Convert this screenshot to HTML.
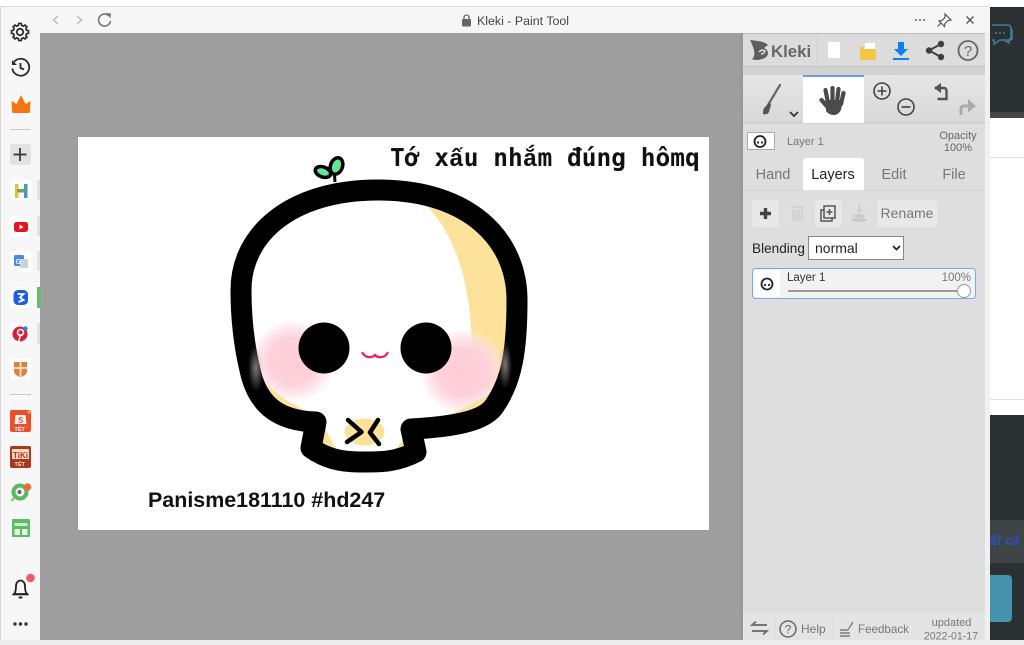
<!DOCTYPE html>
<html><head><meta charset="utf-8"><title>Kleki - Paint Tool</title>
<style>
html,body{margin:0;padding:0;width:1024px;height:645px;overflow:hidden;background:#fff}
svg{display:block}
text{font-family:"Liberation Sans",sans-serif}
</style></head><body>
<svg width="1024" height="645" viewBox="0 0 1024 645" xmlns="http://www.w3.org/2000/svg">
<defs>
<radialGradient id="bl"><stop offset="0" stop-color="#fdccd7"/><stop offset=".55" stop-color="#fdd1db"/><stop offset=".8" stop-color="#fddfe5" stop-opacity=".7"/><stop offset="1" stop-color="#fde8ec" stop-opacity="0"/></radialGradient>
<radialGradient id="bs"><stop offset="0" stop-color="#c8b4b8" stop-opacity=".65"/><stop offset="1" stop-color="#c8b4b8" stop-opacity="0"/></radialGradient>
<linearGradient id="tb" x1="0" y1="0" x2="0" y2="1"><stop offset="0" stop-color="#e6e6e6"/><stop offset="1" stop-color="#d8d8d8"/></linearGradient>
<clipPath id="skull"><path d="M316 422C282 421 258 408 250 370C244 345 241 320 241 290C241 235 290 190 378 190C470 190 517 240 517 300C517 350 512 380 495 405C485 422 450 427 411 429L416 452C395 463 377 462 360 462C340 462 325 458 311 448z"/></clipPath>
</defs>
<!-- page base -->
<rect width="1024" height="645" fill="#f7f7f7"/>
<rect width="1024" height="6" fill="#fff"/>
<rect y="6" width="990" height="1.5" fill="#dcdcdc"/>
<!-- right background page -->
<rect x="990" y="7" width="34" height="111" fill="#2b3032"/>
<rect x="990" y="112" width="34" height="6" fill="#44484a"/>
<rect x="990" y="118" width="34" height="297" fill="#fff"/>
<rect x="990" y="157" width="34" height="1" fill="#e2e2e2"/>
<rect x="990" y="399" width="34" height="1" fill="#e2e2e2"/>
<rect x="990" y="415" width="34" height="225" fill="#2b3032"/>
<rect x="990" y="520" width="34" height="43" fill="#3f4446"/>
<text x="989" y="545" font-size="13.500" font-style="italic" font-weight="bold" fill="#2f4fc0">ất cả</text>
<rect x="980" y="575" width="32" height="47" rx="4" fill="#4593ad"/>
<g fill="none" stroke="#3f7f98" stroke-width="1.600"><path d="M992 25h16a3 3 0 0 1 3 3v9a3 3 0 0 1-3 3h-8l-6 4v-4h-2"/><path d="M1011 29a3 3 0 0 1 1 2v8l-1 1h-2v3l-5-3"/></g>
<g fill="#3f7f98"><circle cx="996" cy="33" r="1"/><circle cx="1000" cy="33" r="1"/><circle cx="1004" cy="33" r="1"/></g>

<!-- window -->
<rect x="40" y="7" width="950" height="26" fill="#f6f6f6"/>
<rect x="40" y="33" width="703" height="607" fill="#9e9e9e"/>
<rect x="985" y="33" width="5" height="607" fill="#f0f0f0"/>
<rect y="640" width="1024" height="5" fill="#ececec"/>
<!-- toolbar -->
<g fill="none" stroke="#bcbcbc" stroke-width="1.500"><path d="M58 16l-4.500 4 4.500 4"/><path d="M77 16l4.500 4-4.500 4"/></g>
<path d="M109 16a6 6 0 1 0 1.500 5" fill="none" stroke="#777" stroke-width="1.600"/><path d="M106 13l5 .5-.5 5z" fill="#777"/>
<rect x="462" y="19" width="9" height="7.500" rx="1" fill="#666"/><path d="M464 19.500v-2a2.500 2.500 0 0 1 5 0v2" fill="none" stroke="#666" stroke-width="1.300"/>
<text x="477" y="25" font-size="12.400" fill="#444">Kleki - Paint Tool</text>
<g fill="#666"><circle cx="916" cy="20" r="1"/><circle cx="920" cy="20" r="1"/><circle cx="924" cy="20" r="1"/></g>
<path d="M945 14l6 6-3 .5-3 3-.5 3-5.500-5.500 3-.5 3-3zM941 23l-3.500 3.500" fill="none" stroke="#555" stroke-width="1.200"/>
<path d="M966.500 16.500l7 7M973.500 16.500l-7 7" stroke="#555" stroke-width="1.400"/>

<!-- left sidebar -->
<rect x="0" y="7" width="40" height="633" fill="#f7f7f7"/>
<rect x="0" y="7" width="1" height="633" fill="#d5d5d5"/>
<g fill="none" stroke="#2b2b2b" stroke-width="1.800">
<circle cx="20" cy="32" r="3.200"/>
<path stroke-width="2" d="M18.500 24h3l.5 2.200 2 .9 2-1.200 2.100 2.100-1.200 2 .9 2 2.200.5v3l-2.200.5-.9 2 1.200 2-2.100 2.100-2-1.200-2 .9-.5 2.200h-3l-.5-2.200-2-.9-2 1.200-2.100-2.100 1.200-2-.9-2-2.200-.5v-3l2.200-.5.9-2-1.200-2 2.100-2.100 2 1.200 2-.9z" transform="translate(3 3.100) scale(.85)"/>
<path d="M14 62a8.500 8.500 0 1 1-1.700 6.500"/>
<path d="M20.500 63v5l3.500 1.500"/>
</g>
<path d="M12 60v5h5z" fill="#2b2b2b"/>
<path d="M13.500 113c-.8 0-1.300-.5-1.400-1.300L11.500 101l5 3L21 95l4.500 9 5-3-.6 10.700c-.1.800-.6 1.300-1.400 1.300z" fill="#f5760f"/>
<rect x="10" y="129" width="21" height="1" fill="#c8c8c8"/>
<rect x="10" y="144" width="21" height="21" rx="3" fill="#e2e2e2"/>
<path d="M20 148v13M13.500 154.500h13" stroke="#333" stroke-width="1.700"/>
<!-- app icons -->
<g><rect x="10" y="179" width="21" height="21" rx="4" fill="#fff"/>
<rect x="15" y="184" width="3.500" height="14" fill="#e8c23a"/><rect x="24" y="184" width="3.500" height="14" fill="#3e9fb0"/><rect x="17" y="189" width="9" height="3.500" fill="#6aa36f"/>
<rect x="37" y="180" width="3" height="20" fill="#e2e2e2"/></g>
<g><rect x="10" y="216" width="21" height="21" rx="4" fill="#fff"/><rect x="14" y="222" width="14" height="10" rx="2.500" fill="#e8131f"/><path d="M19.500 224.500l4 2.500-4 2.500z" fill="#fff"/><rect x="37" y="216" width="3" height="20" fill="#e2e2e2"/></g>
<g><rect x="10" y="251" width="21" height="21" rx="4" fill="#fff"/><rect x="14" y="255" width="10" height="11" rx="1.500" fill="#4a86e8"/><rect x="20" y="259" width="8" height="9" rx="1" fill="#c9d3da"/><text x="15.500" y="264" font-size="7" font-weight="bold" fill="#fff">G</text><rect x="37" y="251" width="3" height="20" fill="#e2e2e2"/></g>
<g><rect x="10" y="287" width="21" height="21" rx="4" fill="#fff"/><rect x="13.500" y="290" width="14.500" height="15" rx="4.500" fill="#1c5fe6"/><path d="M17.500 294h6l-3.500 3.500 3.500 2.500-5 2" fill="none" stroke="#fff" stroke-width="1.800"/><rect x="37" y="287" width="3.500" height="21" fill="#67bb6a"/></g>
<g><rect x="10" y="323" width="21" height="21" rx="4" fill="#fff"/><circle cx="20" cy="334" r="7.500" fill="#dd1c3c"/><path d="M18.500 343l2-9" stroke="#fff" stroke-width="1.500"/><circle cx="20.500" cy="332.500" r="3" fill="none" stroke="#fff" stroke-width="1.600"/><circle cx="25.500" cy="328.500" r="2.200" fill="#1e88e5"/><rect x="37" y="323" width="3" height="21" fill="#e2e2e2"/></g>
<g><rect x="10" y="358" width="21" height="21" rx="4" fill="#fff"/><path d="M14 362h13v9c0 3-3 5-6.500 6.500C17 376 14 374 14 371z" fill="#d9833f"/><path d="M20.500 362v15M14 368h13" stroke="#f2e2c9" stroke-width="1.800"/></g>
<rect x="10" y="394" width="21" height="1" fill="#c8c8c8"/>
<g><rect x="10" y="410" width="21" height="22" rx="2" fill="#ee4d2d"/><path d="M15.500 415h10l1 9h-12z" fill="#fff" opacity=".95"/><text x="18" y="423" font-size="8" font-weight="bold" fill="#ee4d2d">S</text><text x="14.500" y="431" font-size="5.500" font-weight="bold" fill="#fff">TẾT</text><circle cx="29" cy="412" r="1.500" fill="#f7b733"/></g>
<g><rect x="10" y="446" width="21" height="22" rx="2" fill="#a8391f"/><rect x="12" y="449" width="17" height="10" fill="#f3dcc0"/><text x="13" y="458" font-size="8" font-weight="bold" fill="#c9281e">TiKi</text><text x="14.500" y="466" font-size="5.500" font-weight="bold" fill="#f6e3b5">TẾT</text></g>
<g><circle cx="20" cy="492" r="6.500" fill="none" stroke="#5cb85c" stroke-width="4"/><circle cx="19.500" cy="492" r="2" fill="#666"/><path d="M15 497l-3.500 4" stroke="#7cc36e" stroke-width="2"/><circle cx="27.500" cy="487" r="3.800" fill="#ee6a3f"/></g>
<g><rect x="12" y="519" width="18" height="18" rx="1" fill="#5dbb63"/><rect x="14.500" y="523" width="13" height="3" fill="#cdeccf"/><rect x="14.500" y="529" width="5.500" height="6" fill="#e3f5e3"/><rect x="22" y="529" width="5.500" height="6" fill="#e3f5e3"/></g>
<path d="M14 594c1.500-1.500 2-4 2-8a4.500 5.500 0 0 1 9 0c0 4 .5 6.500 2 8z" fill="none" stroke="#222" stroke-width="1.800"/><rect x="12.500" y="593.500" width="16" height="1.800" fill="#222"/><rect x="18.500" y="596.500" width="4" height="2" rx="1" fill="#222"/>
<circle cx="30.500" cy="578" r="4.300" fill="#f5566c"/>
<g fill="#333"><circle cx="15" cy="624" r="1.700"/><circle cx="20.500" cy="624" r="1.700"/><circle cx="26" cy="624" r="1.700"/></g>

<!-- canvas -->
<rect x="78" y="137" width="631" height="393" fill="#fff"/>
<text x="390" y="166" style="font-family:'DejaVu Sans Mono',monospace;font-weight:bold;font-size:24.500px;white-space:pre" fill="#111">Tớ x<tspan style="font-family:'Liberation Mono',monospace">ấ</tspan>u nh<tspan style="font-family:'Liberation Mono',monospace">ắ</tspan>m đúng hômq</text>
<text x="148" y="507" font-size="21.450" font-weight="bold" fill="#111">Panisme181110 #hd247</text>
<!-- skull fill pieces -->
<g clip-path="url(#skull)">
<rect x="230" y="180" width="300" height="290" fill="#fff"/>
<path d="M426 205C455 235 470 280 472 345L468 390H520V205z" fill="#fde29b"/>
<ellipse cx="293" cy="361" rx="44" ry="42" fill="url(#bl)"/>
<ellipse cx="463" cy="372" rx="44" ry="44" fill="url(#bl)"/>
<path d="M250 368C264 382 278 398 303 409V425H250z" fill="#fde29b"/>
<path d="M438 420C465 408 490 398 512 372V430H430z" fill="#fde29b"/>
<path d="M325 428L337 451H316zM403 440L406 456H390z" fill="#fde29b"/>
<ellipse cx="364.500" cy="432" rx="20" ry="13.500" fill="#fde29b"/>
</g>
<!-- outline -->
<path d="M316 422C282 421 258 408 250 370C244 345 241 320 241 290C241 235 290 190 378 190C470 190 517 240 517 300C517 350 512 380 495 405C485 422 450 427 411 429L416 452C395 463 377 462 360 462C340 462 325 458 311 448z" fill="none" stroke="#000" stroke-width="21" stroke-linejoin="round"/>
<!-- bow -->
<path d="M348 420L361.500 432L347 442M378 420L370 432.500L379 444" fill="none" stroke="#000" stroke-width="4.500" stroke-linecap="round" stroke-linejoin="round"/>
<!-- smudges on outline -->
<ellipse cx="256" cy="368" rx="8" ry="24" fill="url(#bs)"/>
<ellipse cx="505" cy="365" rx="7" ry="24" fill="url(#bs)"/>
<!-- eyes, mouth -->
<circle cx="324" cy="348" r="25.500" fill="#000"/>
<circle cx="426" cy="348" r="25.500" fill="#000"/>
<path d="M362.500 353Q366 358 371 357Q374 356.500 375 355Q378 358 382 357Q386 356 387.500 353" fill="none" stroke="#f01f5b" stroke-width="2.300" stroke-linecap="round"/>
<!-- sprout -->
<path d="M335 182l-.5-8" stroke="#000" stroke-width="3"/>
<ellipse cx="323" cy="172" rx="8" ry="5" transform="rotate(20 323 172)" fill="#62e49a" stroke="#000" stroke-width="3.500"/>
<ellipse cx="336.500" cy="166" rx="6" ry="8.500" transform="rotate(20 336.500 166)" fill="#62e49a" stroke="#000" stroke-width="3.500"/>

<!-- panel -->
<rect x="740" y="33" width="3" height="607" fill="#999"/>
<rect x="743" y="34" width="242" height="606" fill="#dedede"/>
<rect x="743" y="33" width="242" height="1.500" fill="#bbb"/>
<rect x="743" y="34" width="242" height="33" fill="#dcdcdc"/>
<rect x="743" y="66" width="242" height="1" fill="#c8c8c8"/>
<rect x="743" y="67" width="242" height="8" fill="#d2d2d2"/>
<rect x="743" y="75" width="242" height="48" fill="url(#tb)"/>
<rect x="743" y="122.500" width="242" height="1" fill="#c4c4c4"/>
<rect x="817" y="34" width="1" height="32" fill="#d0d0d0"/>
<!-- logo -->
<path d="M750 40C757 41 764 41 768 45L764 48C768 50 769 53 767 56C764 60 755 61 752 59C755 57 755 52 753 47C752 44 751 42 750 40z" fill="#5e5e5e"/>
<path d="M759 52q3-3 6-1q-1 3-4 3" fill="none" stroke="#dcdcdc" stroke-width="1.500"/>
<text x="771" y="57" font-size="16.800" font-weight="bold" fill="#666">Kleki</text>
<rect x="828" y="42" width="12" height="16" fill="#fff"/>
<path d="M860 49h16v9a2 2 0 0 1-2 2h-12a2 2 0 0 1-2-2z" fill="#f6c543"/><path d="M860 47h4v3h-4z" fill="#f6c543"/><path d="M865 43h10v6h-10z" fill="#fff"/>
<path d="M898 42h6v7h4l-7 7-7-7h4z" fill="#0a80f0"/><rect x="893" y="58" width="16" height="2" fill="#0a80f0"/>
<g fill="#3f3f3f"><circle cx="941" cy="44" r="3.200"/><circle cx="941" cy="57" r="3.200"/><circle cx="929" cy="50.500" r="3.200"/></g><path d="M941 44l-12 6.500 12 6.500" fill="none" stroke="#3f3f3f" stroke-width="2"/>
<circle cx="968" cy="50.500" r="9.500" fill="none" stroke="#666" stroke-width="1.800"/>
<text x="968" y="56" font-size="15" fill="#666" text-anchor="middle">?</text>
<!-- toolbar row -->
<rect x="803" y="75" width="61" height="48" fill="#fff"/>
<rect x="803" y="75" width="61" height="2" fill="#6d9ee0"/>
<path d="M780 85L768 105" stroke="#666" stroke-width="2.200" stroke-linecap="round"/>
<path d="M770 102l-5 5c-2 2-2 5-2 7c2 1 5 0 6-2l2-7z" fill="#555"/>
<path d="M790 112l4 4 4-4" fill="none" stroke="#333" stroke-width="1.800"/>
<g stroke="#4a4a4a" stroke-width="4.200" stroke-linecap="round"><path d="M828 103L825.500 90M832.500 102V88M837 102L838.500 89M841 104L843.500 93M830 110L821.500 100"/></g>
<path d="M826 100H843L841 110Q838 115 834 115Q829 115 826 111z" fill="#4a4a4a"/>
<g fill="none" stroke="#444" stroke-width="1.600"><circle cx="882" cy="91" r="8"/><path d="M877.500 91h9M882 86.500v9"/><circle cx="906" cy="107" r="8"/><path d="M901.500 107h9"/></g>
<path d="M935 88h9a2.500 2.500 0 0 1 2.500 2.500V99h-9" fill="none" stroke="#555" stroke-width="2.400"/><path d="M941 83l-7 5 7 5z" fill="#555"/>
<path d="M961 115V108.500a2.500 2.500 0 0 1 2.500-2.500H970" fill="none" stroke="#aaa" stroke-width="3"/><path d="M968 99l8 7-8 6.500z" fill="#aaa"/>
<!-- layer row -->
<rect x="747.500" y="132.500" width="27" height="17" fill="#fff" stroke="#aaa"/>
<circle cx="760" cy="141.500" r="5.500" fill="#fff" stroke="#222" stroke-width="1.800"/><circle cx="758" cy="142.500" r="1.100" fill="#222"/><circle cx="762" cy="142.500" r="1.100" fill="#222"/>
<text x="787" y="145" font-size="11" fill="#777">Layer 1</text>
<text x="958" y="139" font-size="11" fill="#666" text-anchor="middle">Opacity</text>
<text x="958" y="151" font-size="11" fill="#666" text-anchor="middle">100%</text>
<!-- tabs -->
<path d="M803 190v-29a3 3 0 0 1 3-3h55a3 3 0 0 1 3 3v29z" fill="#fff"/>
<rect x="743" y="189.500" width="60" height="1" fill="#d4d4d4"/><rect x="864" y="189.500" width="121" height="1" fill="#d4d4d4"/>
<text x="773" y="179" font-size="14.500" fill="#777" text-anchor="middle">Hand</text>
<text x="833" y="179" font-size="14.500" fill="#222" text-anchor="middle">Layers</text>
<text x="894" y="179" font-size="14.500" fill="#777" text-anchor="middle">Edit</text>
<text x="954" y="179" font-size="14.500" fill="#777" text-anchor="middle">File</text>
<!-- layer buttons -->
<g fill="#e8e8e8"><rect x="752" y="200" width="27" height="27" rx="3"/><rect x="815" y="200" width="27" height="27" rx="3"/><rect x="877" y="200" width="60" height="27" rx="3"/></g>
<g fill="#dfdfdf"><rect x="783" y="200" width="27" height="27" rx="3"/><rect x="846" y="200" width="27" height="27" rx="3"/></g>
<path d="M765.500 208v11M760 213.500h11" stroke="#444" stroke-width="3.400"/>
<g fill="none" stroke="#cdcdcd" stroke-width="1.300"><path d="M791 207h13M793 209v11h9v-11M795.500 210v9M797.500 210v9M799.500 210v9"/></g>
<g fill="none" stroke="#555" stroke-width="1.500"><rect x="824" y="206" width="11" height="12"/><path d="M824 210h-3v11h11v-3"/><path d="M829.500 209v6M826.500 212h6" stroke-width="1.600"/></g>
<g fill="#c8c8c8"><rect x="858.500" y="205" width="1.500" height="7"/><path d="M856.500 210l3 3 3-3z"/><ellipse cx="859" cy="216" rx="6" ry="1.800"/><ellipse cx="859" cy="220" rx="8" ry="1.800"/></g>
<text x="907" y="218" font-size="14" fill="#777" text-anchor="middle">Rename</text>
<!-- blending -->
<text x="752" y="253" font-size="13.600" fill="#222">Blending</text>
<rect x="808.500" y="236.500" width="95" height="23" fill="#fff" stroke="#888"/>
<text x="815" y="253" font-size="14" fill="#222">normal</text>
<path d="M893 246l3.500 3.500 3.500-3.500" fill="none" stroke="#222" stroke-width="1.800"/>
<!-- layer item -->
<rect x="752.500" y="268.500" width="223" height="30" rx="3" fill="#f2f2f2" stroke="#7fa8e6"/>
<rect x="754" y="270" width="26" height="27" fill="#fff"/>
<circle cx="767" cy="284" r="5.500" fill="#fff" stroke="#222" stroke-width="1.800"/><circle cx="765" cy="285" r="1.100" fill="#222"/><circle cx="769" cy="285" r="1.100" fill="#222"/>
<text x="787" y="281" font-size="11.500" fill="#333">Layer 1</text>
<text x="971" y="281" font-size="11.500" fill="#777" text-anchor="end">100%</text>
<rect x="788" y="290" width="172" height="2" fill="#999"/>
<circle cx="964" cy="291" r="6.500" fill="#fff" stroke="#999"/>
<!-- footer -->
<g fill="#e4e4e4"><rect x="743" y="613" width="32" height="27"/><rect x="776" y="613" width="56" height="27"/><rect x="834" y="613" width="83" height="27"/><rect x="918" y="613" width="67" height="27"/></g>
<g fill="none" stroke="#666" stroke-width="1.700"><path d="M767 625h-15l4-3.500M752 631h15l-4 3.500"/></g>
<circle cx="788" cy="629" r="8" fill="none" stroke="#666" stroke-width="1.500"/>
<text x="788" y="633.500" font-size="12" fill="#666" text-anchor="middle">?</text>
<text x="801" y="633" font-size="12" fill="#777">Help</text>
<path d="M840 630h8M840 633h10M840 636h10" stroke="#666" stroke-width="1.200"/><path d="M848 630l5-8" stroke="#888" stroke-width="1.500"/>
<text x="858" y="633" font-size="11.600" fill="#777">Feedback</text>
<text x="951.500" y="626" font-size="11" fill="#777" text-anchor="middle">updated</text>
<text x="951" y="639.500" font-size="10.600" fill="#777" text-anchor="middle">2022-01-17</text>
</svg>
</body></html>
